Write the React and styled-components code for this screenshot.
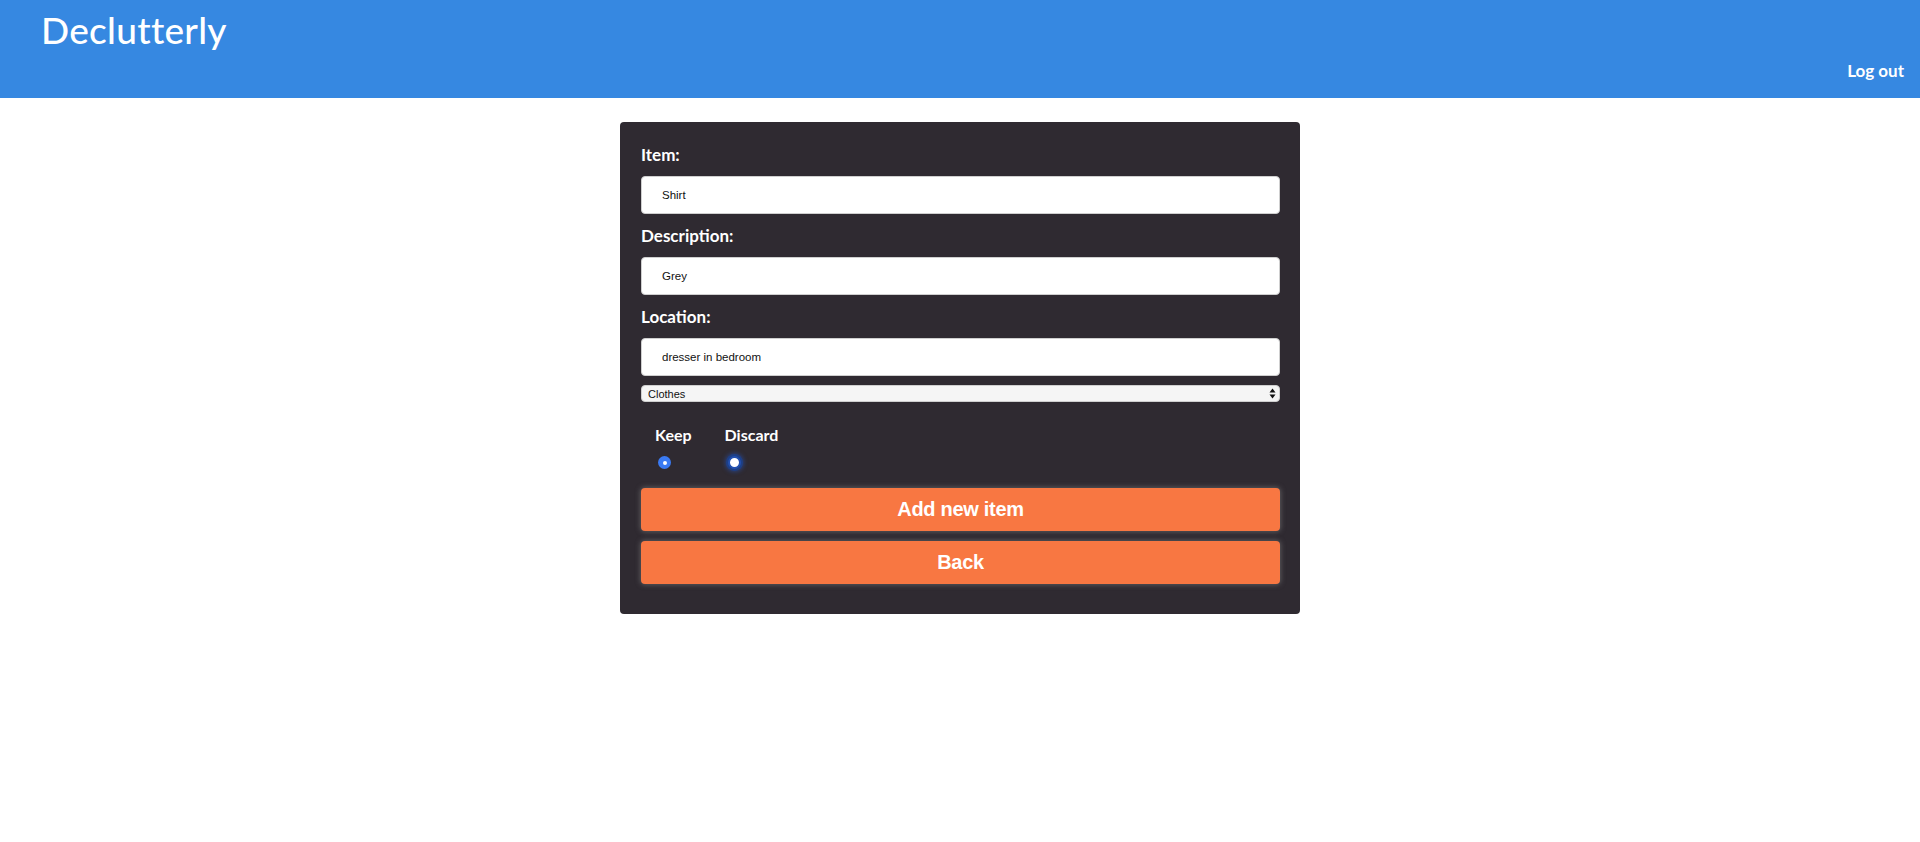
import React, { useState } from 'react'
import styled, { createGlobalStyle } from 'styled-components'

const GlobalStyle = createGlobalStyle`
    body {
        margin: 0;
        background: #ffffff;
        font-family: "Lato", "Noto Sans", sans-serif;
    }
`

const Header = styled.header`
    height: 98px;
    background: #3688e1;
    display: flex;
    justify-content: space-between;
    align-items: flex-start;
    padding: 0 16px 0 41px;
    box-sizing: border-box;
`

const Logo = styled.h1`
    margin: 7px 0 0;
    font-family: "Lato", "Noto Sans", sans-serif;
    font-weight: 500;
    font-size: 37px;
    letter-spacing: 0.3px;
    color: #ffffff;
`

const LogOut = styled.a`
    align-self: flex-end;
    margin-bottom: 17px;
    font-family: "Lato", sans-serif;
    font-weight: 700;
    font-size: 17px;
    color: #ffffff;
    cursor: pointer;
`

const Main = styled.main`
    display: flex;
    justify-content: center;
    padding-top: 24px;
`

const Card = styled.form`
    width: 680px;
    box-sizing: border-box;
    background: #2f2a31;
    border-radius: 4px;
    padding: 21px 20px 30px 21px;
    display: flex;
    flex-direction: column;
`

const Label = styled.label`
    display: block;
    font-family: "Lato", sans-serif;
    font-weight: 700;
    font-size: 17px;
    line-height: 24px;
    color: #ffffff;
    margin-bottom: 9px;
`

const Input = styled.input`
    height: 38px;
    box-sizing: border-box;
    border: 1px solid #cfcfcf;
    border-radius: 4px;
    padding: 0 20px;
    margin: 0 0 10px;
    font-family: "Liberation Sans", Arial, sans-serif;
    font-size: 11.5px;
    color: #111111;
    background: #ffffff;
    outline: none;
`

const SelectWrap = styled.div`
    position: relative;
    display: flex;
    margin-top: -1px;
`

const Select = styled.select`
    flex: 1;
    height: 17px;
    margin: 0;
    padding: 0 0 0 6px;
    border: 1px solid #cfcfcf;
    border-radius: 4px;
    background: #f5f5f5;
    font-family: "Liberation Sans", Arial, sans-serif;
    font-size: 11px;
    color: #111111;
    appearance: none;
`

const Arrows = styled.svg`
    position: absolute;
    right: 4px;
    top: 3px;
    pointer-events: none;
`

const RadioGroup = styled.div`
    display: flex;
    gap: 33px;
    padding: 22px 0 0 14px;
`

const RadioOption = styled.label`
    display: flex;
    flex-direction: column;
    align-items: flex-start;
    font-family: "Lato", sans-serif;
    font-weight: 700;
    font-size: 16px;
    line-height: 22px;
    color: #ffffff;
    cursor: pointer;
`

const Radio = styled.input.attrs({ type: 'radio' })`
    appearance: none;
    width: 13px;
    height: 13px;
    margin: 10px 0 0 3px;
    border-radius: 50%;
    box-sizing: border-box;
    background: ${p => (p.checked ? '#3a7af3' : '#ffffff')};
    border: ${p => (p.checked ? 'none' : '2px solid #2350b0')};
    box-shadow: ${p => (p.checked ? 'none' : '0 0 0 2px #1d3f86, 0 0 4px 3px rgba(40,90,200,0.5)')};
    position: relative;

    &:checked::after {
        content: '';
        position: absolute;
        left: 50%;
        top: 50%;
        width: 4px;
        height: 4px;
        margin: -2px 0 0 -2px;
        border-radius: 50%;
        background: #ffffff;
    }
`

const Button = styled.button`
    height: 43px;
    margin-top: ${p => (p.first ? '19px' : '10px')};
    border: none;
    border-radius: 4px;
    background: #f87742;
    color: #ffffff;
    font-family: "Liberation Sans", Arial, sans-serif;
    font-weight: 700;
    font-size: 20px;
    letter-spacing: -0.3px;
    box-shadow: 0 0 5px 1px rgba(120, 120, 120, 0.6);
    cursor: pointer;
`

const App = () => {
    const [choice, setChoice] = useState('keep')

    return (
        <>
            <GlobalStyle />
            <Header>
                <Logo>Declutterly</Logo>
                <LogOut>Log out</LogOut>
            </Header>
            <Main>
                <Card onSubmit={e => e.preventDefault()}>
                    <Label htmlFor="item">Item:</Label>
                    <Input id="item" defaultValue="Shirt" />
                    <Label htmlFor="description">Description:</Label>
                    <Input id="description" defaultValue="Grey" />
                    <Label htmlFor="location">Location:</Label>
                    <Input id="location" defaultValue="dresser in bedroom" />
                    <SelectWrap>
                        <Select defaultValue="Clothes">
                            <option>Clothes</option>
                            <option>Books</option>
                            <option>Kitchen</option>
                            <option>Other</option>
                        </Select>
                        <Arrows width="7" height="11" viewBox="0 0 7 11">
                            <path d="M3.5 0.5 L6.5 4.5 H0.5 Z" fill="#111" />
                            <path d="M3.5 10.5 L6.5 6.5 H0.5 Z" fill="#111" />
                        </Arrows>
                    </SelectWrap>
                    <RadioGroup>
                        <RadioOption>
                            Keep
                            <Radio name="choice" checked={choice === 'keep'} onChange={() => setChoice('keep')} />
                        </RadioOption>
                        <RadioOption>
                            Discard
                            <Radio name="choice" checked={choice === 'discard'} onChange={() => setChoice('discard')} />
                        </RadioOption>
                    </RadioGroup>
                    <Button first type="submit">Add new item</Button>
                    <Button type="button">Back</Button>
                </Card>
            </Main>
        </>
    )
}

export default App
